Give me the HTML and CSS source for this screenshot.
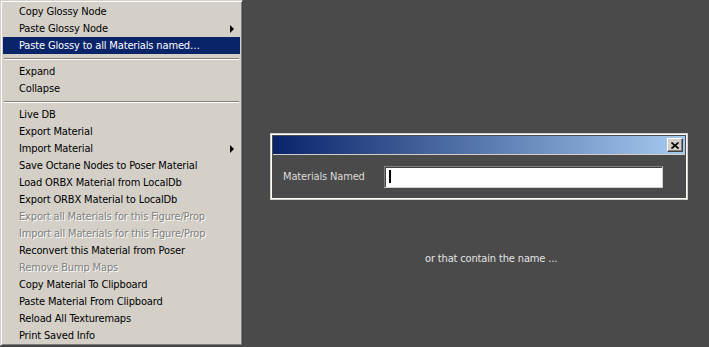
FILE: index.html
```html
<!DOCTYPE html>
<html>
<head>
<meta charset="utf-8">
<link rel="stylesheet" href="styles.css">
</head>
<body>
<div class="menu">
  <div class="item">Copy Glossy Node</div>
  <div class="item">Paste Glossy Node<span class="arrow"></span></div>
  <div class="item active">Paste Glossy to all Materials named…</div>
  <div class="sep"></div>
  <div class="item">Expand</div>
  <div class="item">Collapse</div>
  <div class="sep"></div>
  <div class="item">Live DB</div>
  <div class="item">Export Material</div>
  <div class="item">Import Material<span class="arrow"></span></div>
  <div class="item">Save Octane Nodes to Poser Material</div>
  <div class="item">Load ORBX Material from LocalDb</div>
  <div class="item">Export ORBX Material to LocalDb</div>
  <div class="item disabled">Export all Materials for this Figure/Prop</div>
  <div class="item disabled">Import all Materials for this Figure/Prop</div>
  <div class="item">Reconvert this Material from Poser</div>
  <div class="item disabled">Remove Bump Maps</div>
  <div class="item">Copy Material To Clipboard</div>
  <div class="item">Paste Material From Clipboard</div>
  <div class="item">Reload All Texturemaps</div>
  <div class="item">Print Saved Info</div>
</div>
<div class="workspace">
  <div class="dialog">
    <div class="titlebar">
      <div class="close">
        <svg width="8" height="7" viewBox="0 0 8 7"><path d="M0.5 0.5 L7.5 6.5 M7.5 0.5 L0.5 6.5" stroke="#000" stroke-width="1.6" fill="none"/></svg>
      </div>
    </div>
    <div class="body">
      <span class="label">Materials Named</span>
      <div class="input"><span class="caret"></span></div>
    </div>
  </div>
  <div class="hint">or that contain the name ...</div>
</div>
</body>
</html>
```

FILE: styles.css
```css
html, body {
  margin: 0;
  padding: 0;
}
body {
  width: 709px;
  height: 347px;
  overflow: hidden;
  background: #4a4a4a;
  display: flex;
  align-items: flex-start;
  font-family: "DejaVu Sans Condensed", "DejaVu Sans", sans-serif;
  font-size: 11px;
  letter-spacing: -0.15px;
}
.menu {
  width: 243px;
  box-sizing: border-box;
  background: #d4d0c8;
  border-style: solid;
  border-width: 1px;
  border-color: #d4d0c8 #404040 #404040 #d4d0c8;
  box-shadow: inset 1px 1px 0 #ffffff, inset -1px -1px 0 #808080;
  padding: 2px 2px 1px 2px;
  display: flex;
  flex-direction: column;
}
.item {
  height: 17px;
  line-height: 17px;
  padding: 0 6px 0 16px;
  color: #000;
  display: flex;
  align-items: center;
  white-space: nowrap;
}
.item.active {
  background: #0a246a;
  color: #fff;
}
.item.disabled {
  color: #808080;
  text-shadow: 1px 1px 0 #ffffff;
}
.arrow {
  margin-left: auto;
  width: 0;
  height: 0;
  border-top: 4px solid transparent;
  border-bottom: 4px solid transparent;
  border-left: 4px solid #000;
}
.sep {
  height: 0;
  border-top: 1px solid #808080;
  border-bottom: 1px solid #ffffff;
  margin: 4px 1px 3px 1px;
}
.workspace {
  flex: 1;
  padding: 133px 0 0 27px;
  display: flex;
  flex-direction: column;
  align-items: flex-start;
}
.dialog {
  width: 418px;
  box-sizing: border-box;
  border: 1px solid #d4d0c8;
  padding: 1px;
  box-shadow: inset 0 0 0 1px #ffffff;
  background: #4a4a4a;
}
.titlebar {
  height: 18px;
  margin: 1px 1px 0 1px;
  background: linear-gradient(to right, #0a246a, #a6caf0);
  display: flex;
  justify-content: flex-end;
  align-items: center;
  padding-right: 2px;
  border-bottom: 1px solid #d4d0c8;
}
.close {
  width: 16px;
  height: 14px;
  box-sizing: border-box;
  background: #d4d0c8;
  border: 1px solid;
  border-color: #ffffff #404040 #404040 #ffffff;
  box-shadow: inset -1px -1px 0 #808080;
  display: flex;
  align-items: center;
  justify-content: center;
}
.body {
  height: 43px;
  display: flex;
  align-items: center;
  padding-left: 11px;
}
.label {
  color: #dcdcdc;
  width: 101px;
}
.input {
  width: 279px;
  height: 22px;
  box-sizing: border-box;
  background: #fff;
  border: 1px solid;
  border-color: #808080 #d4d0c8 #d4d0c8 #808080;
  box-shadow: inset 1px 1px 0 #404040;
  display: flex;
  align-items: center;
  padding-left: 4px;
}
.caret {
  width: 2px;
  height: 13px;
  background: #000;
}
.hint {
  margin: 52px 0 0 155px;
  color: #e4e4e4;
}
```
